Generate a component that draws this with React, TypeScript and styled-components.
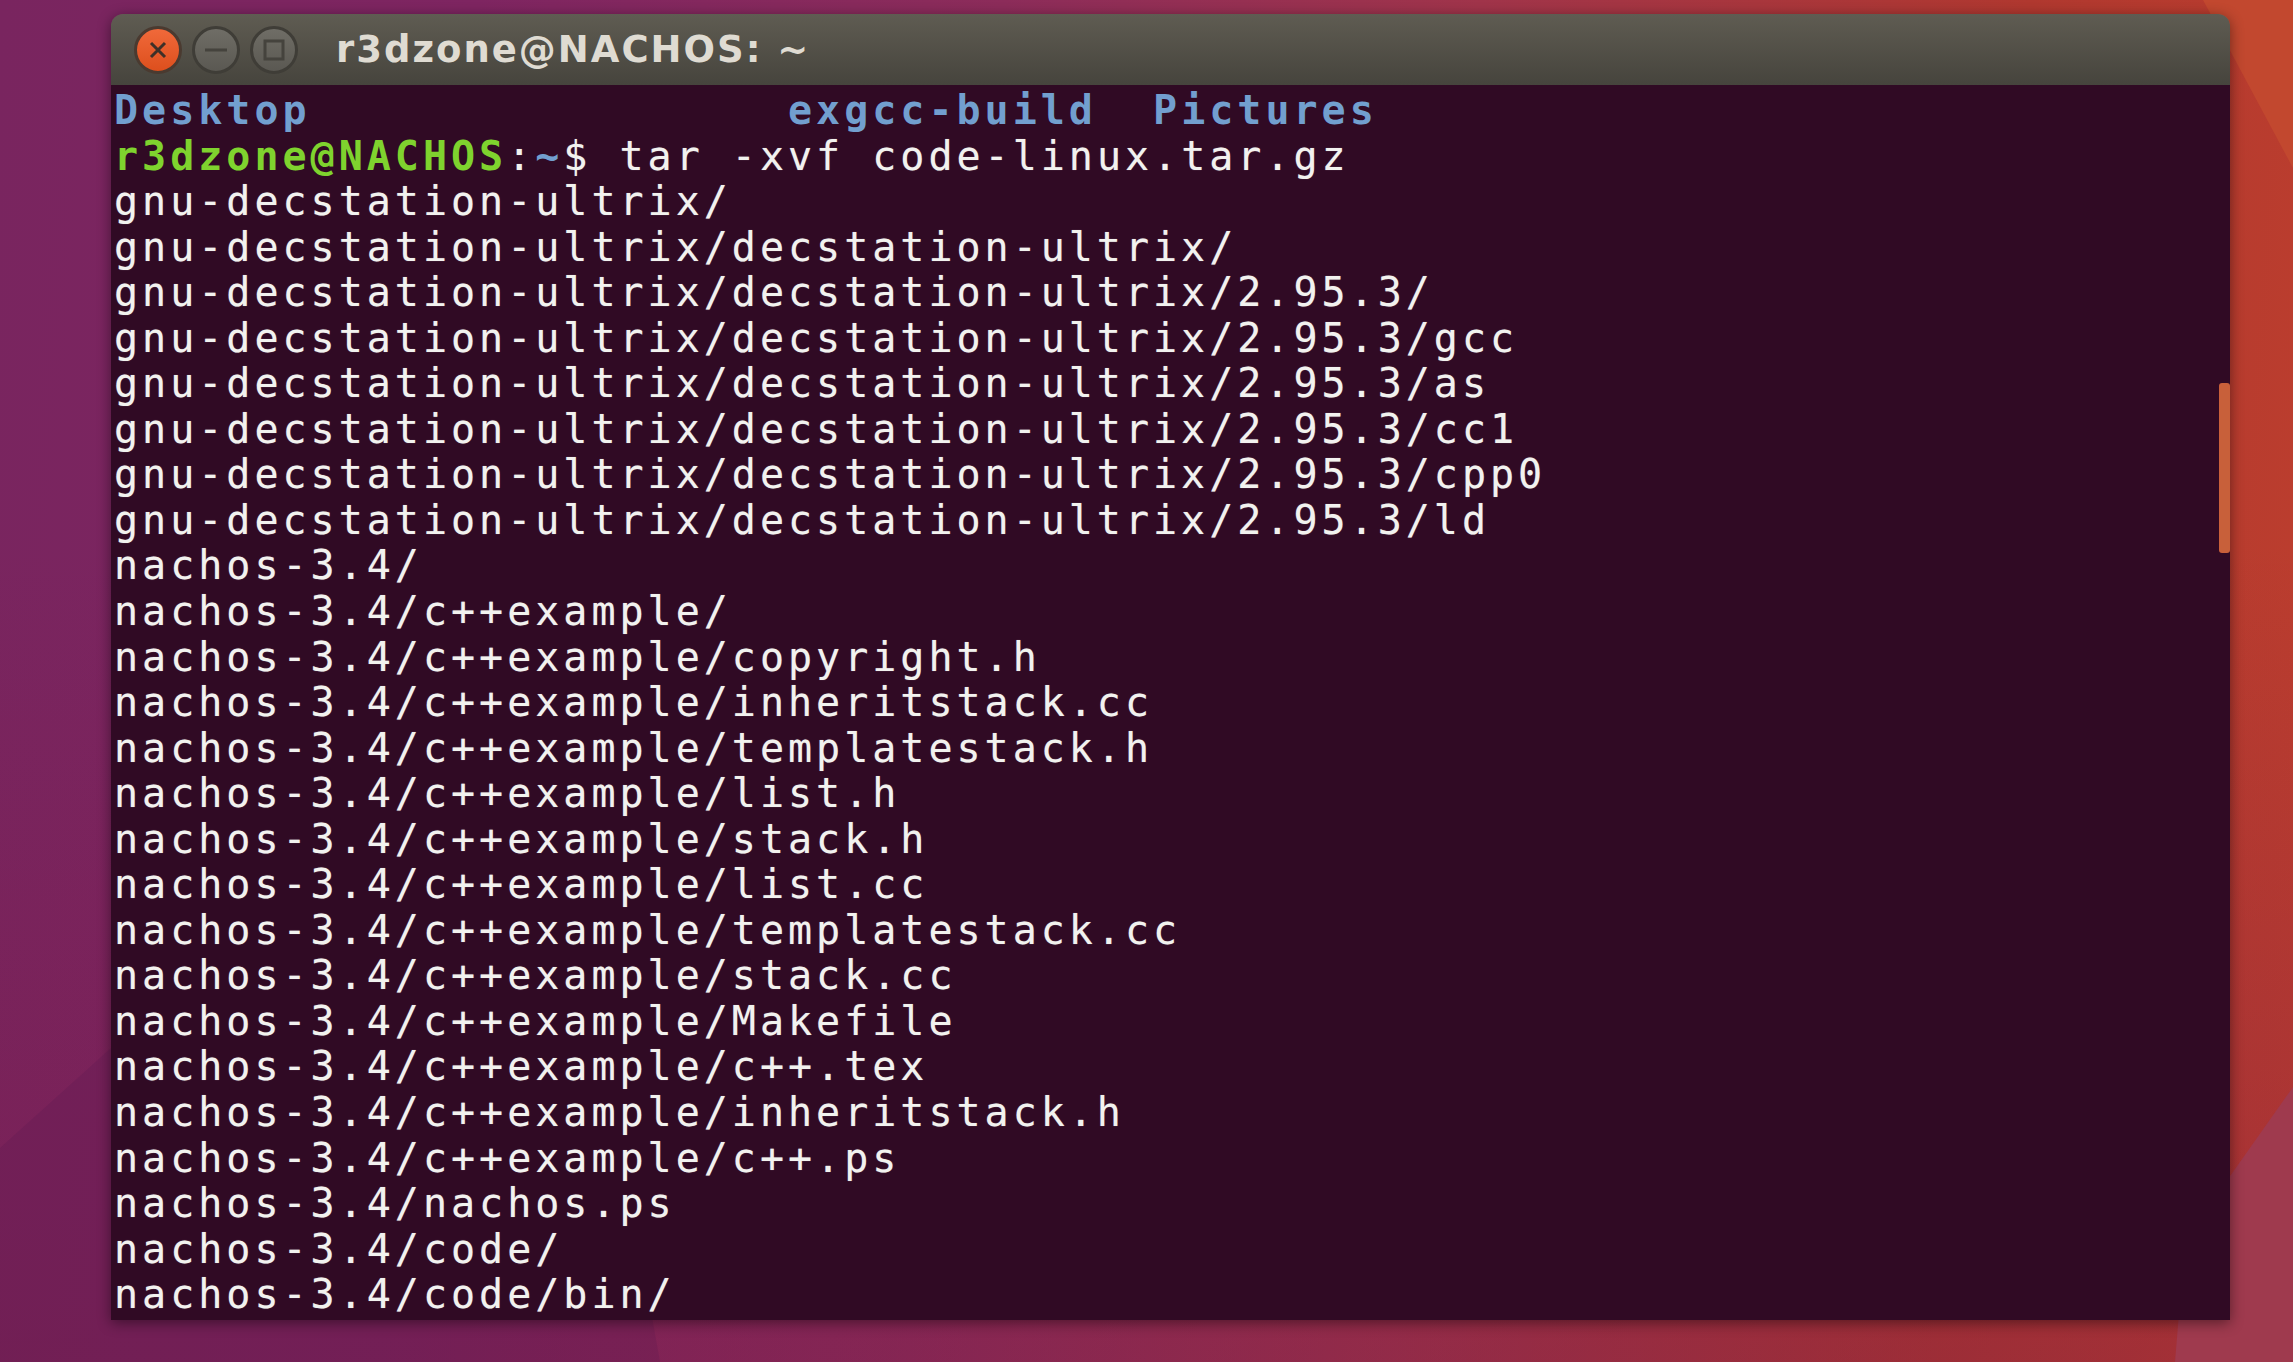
import React from 'react'
import styled, { createGlobalStyle } from 'styled-components'

const GlobalStyle = createGlobalStyle`
  html, body {
    margin: 0;
    padding: 0;
    overflow: hidden;
  }
`

const Desktop = styled.div`
  position: relative;
  width: 2293px;
  height: 1362px;
  box-sizing: border-box;
  padding: 14px 63px 0 111px;
  overflow: hidden;
  background:
    linear-gradient(180deg, rgba(150, 50, 40, 0) 0%, rgba(130, 30, 70, 0) 40%, rgba(120, 25, 70, 0.35) 100%),
    linear-gradient(94deg, #79255f 0%, #7e2561 20%, #8c2c5a 42%, #a0344a 62%, #b0382f 85%, #bd3e2e 100%);
`

// wallpaper facets, they sit behind the window
const Facet = styled.div<{ $shape: string; $tint: string }>`
  position: absolute;
  inset: 0;
  clip-path: polygon(${p => p.$shape});
  background: ${p => p.$tint};
`

const WindowShadow = styled.div`
  position: relative;
  box-shadow: 0 3px 14px rgba(0, 0, 0, 0.45);
  border-radius: 12px 12px 0 0;
`

const Terminal = styled.div`
  position: relative;
  height: 1306px;
  display: flex;
  flex-direction: column;
  border-radius: 12px 12px 0 0;
  overflow: hidden;
`

const TitleBar = styled.div`
  flex: none;
  height: 71px;
  box-sizing: border-box;
  padding-left: 23px;
  display: flex;
  align-items: center;
  background: linear-gradient(180deg, #5f5c52 0%, #46443d 100%);
`

const Controls = styled.div`
  display: flex;
  gap: 10px;
  margin-right: 38px;
`

const WindowButton = styled.div<{ $close?: boolean }>`
  width: 48px;
  height: 48px;
  border-radius: 50%;
  box-sizing: border-box;
  border: 3px solid ${p => (p.$close ? '#4a3a30' : '#3f3d37')};
  background: ${p => (p.$close ? 'linear-gradient(180deg, #f0693a, #dd4f1d)' : 'linear-gradient(180deg, #6f6d66, #5a5852)')};
  display: flex;
  align-items: center;
  justify-content: center;
  svg {
    display: block;
  }
`

const Title = styled.div`
  font-family: 'DejaVu Sans', sans-serif;
  font-size: 37px;
  font-weight: 700;
  letter-spacing: 2px;
  color: #dfdbd2;
`

const Screen = styled.div`
  flex: 1;
  box-sizing: border-box;
  padding: 3px 0 0 3px;
  background: #300a24;
  font-family: 'DejaVu Sans Mono', monospace;
  font-size: 40px;
  letter-spacing: 4px;
  line-height: 45.55px;
  color: #f2f2ef;
  white-space: pre;
  text-shadow: 0 0 1px rgba(255, 255, 255, 0.45);
`

const Line = styled.div`
  height: 45.55px;
`

const Dir = styled.span`
  font-weight: 700;
  color: #729fcf;
  text-shadow: none;
`

const Host = styled.span`
  font-weight: 700;
  color: #7fd32e;
  text-shadow: none;
`

const Path = styled.span`
  font-weight: 700;
  color: #729fcf;
  text-shadow: none;
`

const Scrollbar = styled.div`
  position: absolute;
  right: 0;
  top: 369px;
  width: 11px;
  height: 170px;
  border-radius: 3px;
  background: #c8603a;
`

const output = [
  'gnu-decstation-ultrix/',
  'gnu-decstation-ultrix/decstation-ultrix/',
  'gnu-decstation-ultrix/decstation-ultrix/2.95.3/',
  'gnu-decstation-ultrix/decstation-ultrix/2.95.3/gcc',
  'gnu-decstation-ultrix/decstation-ultrix/2.95.3/as',
  'gnu-decstation-ultrix/decstation-ultrix/2.95.3/cc1',
  'gnu-decstation-ultrix/decstation-ultrix/2.95.3/cpp0',
  'gnu-decstation-ultrix/decstation-ultrix/2.95.3/ld',
  'nachos-3.4/',
  'nachos-3.4/c++example/',
  'nachos-3.4/c++example/copyright.h',
  'nachos-3.4/c++example/inheritstack.cc',
  'nachos-3.4/c++example/templatestack.h',
  'nachos-3.4/c++example/list.h',
  'nachos-3.4/c++example/stack.h',
  'nachos-3.4/c++example/list.cc',
  'nachos-3.4/c++example/templatestack.cc',
  'nachos-3.4/c++example/stack.cc',
  'nachos-3.4/c++example/Makefile',
  'nachos-3.4/c++example/c++.tex',
  'nachos-3.4/c++example/inheritstack.h',
  'nachos-3.4/c++example/c++.ps',
  'nachos-3.4/nachos.ps',
  'nachos-3.4/code/',
  'nachos-3.4/code/bin/',
]

export default function App() {
  return (
    <>
      <GlobalStyle />
      <Desktop>
        <Facet $shape="0 1148px, 111px 1048px, 640px 1250px, 660px 1362px, 0 1362px" $tint="rgba(80, 20, 80, 0.18)" />
        <Facet $shape="2203px 0, 2293px 168px, 2293px 0" $tint="#c2482f" />
        <Facet $shape="2293px 1087px, 2185px 1240px, 2175px 1362px, 2293px 1362px" $tint="#9f3a4e" />
        <WindowShadow>
          <Terminal>
            <TitleBar>
              <Controls>
                <WindowButton $close>
                  <svg width="20" height="20" viewBox="0 0 20 20">
                    <path d="M3 3L17 17M17 3L3 17" stroke="#3d3028" strokeWidth="3" />
                  </svg>
                </WindowButton>
                <WindowButton>
                  <svg width="24" height="6" viewBox="0 0 24 6">
                    <path d="M1 3H23" stroke="#45433d" strokeWidth="3" />
                  </svg>
                </WindowButton>
                <WindowButton>
                  <svg width="22" height="22" viewBox="0 0 22 22">
                    <rect x="2" y="2" width="18" height="18" fill="none" stroke="#45433d" strokeWidth="3" />
                  </svg>
                </WindowButton>
              </Controls>
              <Title>r3dzone@NACHOS: ~</Title>
            </TitleBar>
            <Screen>
              <Line>
                <Dir>Desktop</Dir>{'                 '}<Dir>exgcc-build</Dir>{'  '}<Dir>Pictures</Dir>
              </Line>
              <Line>
                <Host>r3dzone@NACHOS</Host>:<Path>~</Path>$ tar -xvf code-linux.tar.gz
              </Line>
              {output.map((text, i) => (
                <Line key={i}>{text}</Line>
              ))}
            </Screen>
            <Scrollbar />
          </Terminal>
        </WindowShadow>
      </Desktop>
    </>
  )
}
